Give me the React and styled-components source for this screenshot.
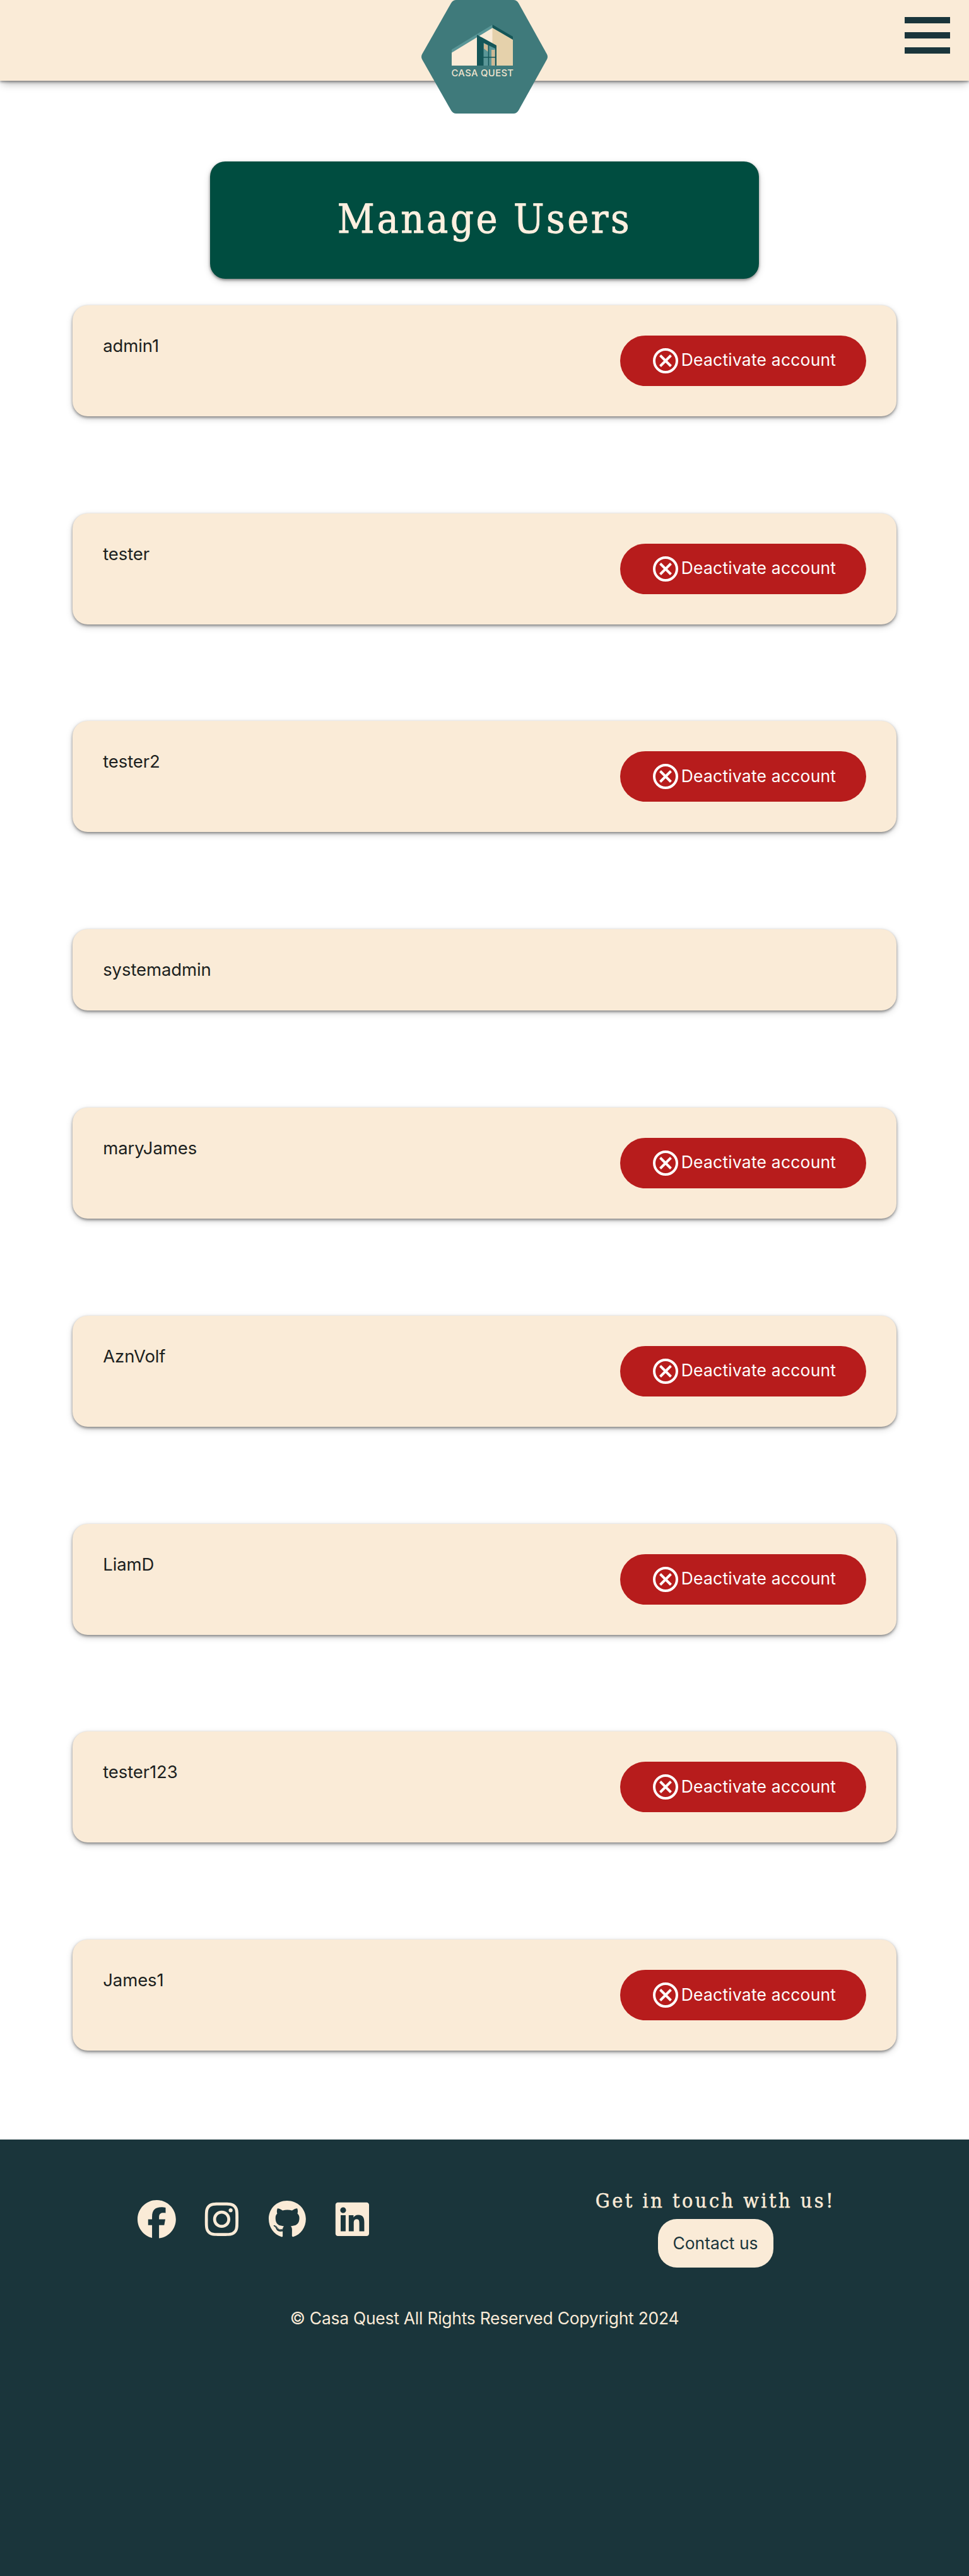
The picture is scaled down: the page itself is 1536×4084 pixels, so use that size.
import React from "react";
import styled, { createGlobalStyle } from "styled-components";
import { FaFacebook, FaInstagram, FaGithub, FaLinkedin } from "react-icons/fa6";

const GlobalStyle = createGlobalStyle`
  * { box-sizing: border-box; }
  body {
    margin: 0;
    background: #fff;
    font-family: Inter, "Liberation Sans", sans-serif;
  }
`;

const raised = "0 2px 4px rgba(0, 0, 0, 0.4), 0 4px 13px -3px rgba(0, 0, 0, 0.3)";

const Page = styled.div`
  display: flex;
  flex-direction: column;
  min-height: 4084px;
`;

const Header = styled.header`
  display: grid;
  grid-template-columns: 1fr 200px 1fr;
  align-items: start;
  height: 128px;
  background: #faebd7;
  box-shadow: rgba(0, 0, 0, 0.4) 0 2px 4px, rgba(0, 0, 0, 0.3) 0 7px 13px -3px;
`;

const Logo = styled.svg`
  grid-column: 2;
  display: block;
  width: 200px;
  height: 180px;
`;

const LogoName = styled.text`
  font: 500 14.8px Inter, "Liberation Sans", sans-serif;
  fill: #f0e4cf;
`;

const MenuButton = styled.button`
  grid-column: 3;
  justify-self: end;
  display: flex;
  flex-direction: column;
  gap: 14px;
  width: 72px;
  margin: 27px 30px 0 0;
  padding: 0;
  border: 0;
  background: none;
`;

const MenuBar = styled.span`
  height: 10px;
  background: #1a353b;
`;

const Main = styled.main`
  display: flex;
  flex-direction: column;
  align-items: center;
  padding-top: 128px;
  height: 3264px;
`;

const Title = styled.h1`
  display: flex;
  align-items: center;
  justify-content: center;
  width: 870px;
  height: 186px;
  margin: 0 0 41.8px;
  padding-bottom: 5px;
  border-radius: 24px;
  background: #004d40;
  box-shadow: ${raised};
  color: #fff0e0;
  font: 400 64px "DejaVu Serif Condensed", "DejaVu Serif", serif;
  font-stretch: condensed;
  letter-spacing: 3.6px;
  -webkit-text-stroke: 0.9px currentColor;
`;

const UserList = styled.ul`
  display: flex;
  flex-direction: column;
  gap: 153.8px;
  width: 85%;
  margin: 0;
  padding: 0;
  list-style: none;
`;

const UserCard = styled.li`
  display: flex;
  justify-content: space-between;
  align-items: flex-start;
  padding: 48px;
  border-radius: 24px;
  background: #faebd7;
  box-shadow: ${raised};
`;

const UserName = styled.span`
  font-size: 27.5px;
  line-height: 33px;
  letter-spacing: -0.1px;
  color: #1c1f20;
`;

const DeactivateButton = styled.button`
  display: flex;
  align-items: center;
  gap: 5px;
  width: 390px;
  height: 80px;
  padding: 0 0 0 52px;
  border: 0;
  border-radius: 40px;
  background: #b71c1c;
  color: #fff;
  font: 400 26.4px Inter, "Liberation Sans", sans-serif;
  letter-spacing: 0.25px;
  white-space: nowrap;
`;

const ButtonLabel = styled.span`
  padding-bottom: 3px;
`;

const CrossIcon = styled.svg`
  flex: none;
  width: 40px;
  height: 40px;
  fill: none;
  stroke: currentColor;
  stroke-width: 4;
`;

const Footer = styled.footer`
  flex: 1;
  display: flex;
  flex-direction: column;
  background: #1a353b;
  color: #faebd7;
`;

const FooterColumns = styled.div`
  display: flex;
  align-items: flex-start;
  justify-content: space-between;
  height: 260px;
  padding: 76px 212px 0 218px;
`;

const Socials = styled.nav`
  display: flex;
  gap: 42.6px;
  padding-top: 20px;

  svg {
    display: block;
    width: 60.8px;
    height: 60.8px;
  }
`;

const Contact = styled.div`
  display: flex;
  flex-direction: column;
  align-items: center;
  width: 380px;
`;

const ContactHeading = styled.h2`
  margin: 0 0 8px;
  font: 400 32px "DejaVu Serif Condensed", "DejaVu Serif", serif;
  font-stretch: condensed;
  line-height: 42px;
  letter-spacing: 3.5px;
  -webkit-text-stroke: 0.5px currentColor;
  white-space: nowrap;
`;

const ContactButton = styled.button`
  width: 183px;
  height: 77px;
  padding: 0 0 2px;
  border: 0;
  border-radius: 30px;
  background: #faebd7;
  color: #1a353b;
  font: 400 26.4px Inter, "Liberation Sans", sans-serif;
  white-space: nowrap;
`;

const Copyright = styled.p`
  margin: 0;
  text-align: center;
  font-size: 26.4px;
  line-height: 47px;
  letter-spacing: -0.22px;
`;

const users = [
  { name: "admin1", active: true },
  { name: "tester", active: true },
  { name: "tester2", active: true },
  { name: "systemadmin", active: false },
  { name: "maryJames", active: true },
  { name: "AznVolf", active: true },
  { name: "LiamD", active: true },
  { name: "tester123", active: true },
  { name: "James1", active: true },
];

function CasaQuestLogo() {
  return (
    <Logo viewBox="0 0 200 180">
      <path
        fill="#3f7a7b"
        d="M55 0H146Q151 0 154 5L199 86Q201 90 199 94L154 175Q151 180 146 180H55Q50 180 47 175L1 94Q-1 90 1 86L47 5Q50 0 55 0Z"
      />
      <path fill="#5a9697" d="M48 78.5 113 39V44L48 83.5Z" />
      <path fill="#faebd7" d="M48 83.5 113 44V104H48Z" />
      <path fill="#e5d1ab" d="M112.500 44 145 62V104H112.500Z" />
      <path fill="#155658" d="M112.500 39 145 58V63L112.500 44Z" />
      <path fill="#155658" d="M88 55 119 72V104H88Z" />
      <path fill="#5a9697" d="M98.500 68 117 77V104H98.500Z" />
      <path fill="#cfb893" d="M99 68.500 105.500 72V82L99 77Z M111 79H116.500V104H111Z" />
      <path stroke="#155658" strokeWidth="1.500" d="M106.500 71V104M98 90.700H118" />
      <LogoName x="47.500" y="120.500" textLength="98.500">CASA QUEST</LogoName>
    </Logo>
  );
}

export default function App() {
  return (
    <Page>
      <GlobalStyle />
      <Header>
        <CasaQuestLogo />
        <MenuButton aria-label="Menu">
          <MenuBar />
          <MenuBar />
          <MenuBar />
        </MenuButton>
      </Header>
      <Main>
        <Title>Manage Users</Title>
        <UserList>
          {users.map((user) => (
            <UserCard key={user.name}>
              <UserName>{user.name}</UserName>
              {user.active && (
                <DeactivateButton>
                  <CrossIcon viewBox="0 0 40 40">
                    <circle cx="20" cy="20" r="18" />
                    <path d="M11.500 11.500 28.500 28.500M28.500 11.500 11.500 28.500" />
                  </CrossIcon>
                  <ButtonLabel>Deactivate account</ButtonLabel>
                </DeactivateButton>
              )}
            </UserCard>
          ))}
        </UserList>
      </Main>
      <Footer>
        <FooterColumns>
          <Socials>
            <FaFacebook />
            <FaInstagram />
            <FaGithub />
            <FaLinkedin />
          </Socials>
          <Contact>
            <ContactHeading>Get in touch with us!</ContactHeading>
            <ContactButton>Contact us</ContactButton>
          </Contact>
        </FooterColumns>
        <Copyright>© Casa Quest All Rights Reserved Copyright 2024</Copyright>
      </Footer>
    </Page>
  );
}
